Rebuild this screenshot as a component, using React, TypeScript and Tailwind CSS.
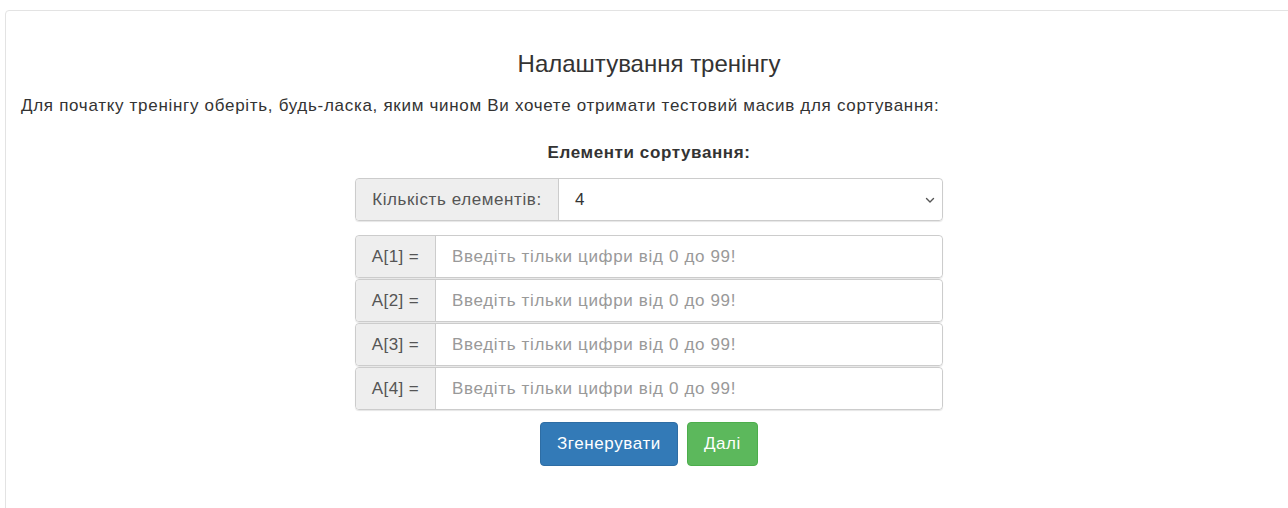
import React from "react";

const font = { fontFamily: '"Liberation Sans", Arial, sans-serif' };

const fieldShadow =
  "shadow-[inset_0_1px_1px_rgba(0,0,0,0.075),0_1px_1px_rgba(0,0,0,0.1)]";

function ElementRow({ index }: { index: number }) {
  return (
    <div className={`flex h-[43px] w-full rounded-[4px] border border-[#cccccc] ${fieldShadow}`}>
      <div className="flex w-[80px] shrink-0 items-center justify-center rounded-l-[4px] border-r border-[#cccccc] bg-[#eeeeee] text-[17px] tracking-[0.4px] text-[#555555]">
        A[{index}] =
      </div>
      <input
        className="min-w-0 flex-1 rounded-r-[4px] bg-white px-[16px] text-[17px] tracking-[0.65px] text-[#555555] outline-none placeholder:text-[#999999]"
        placeholder="Введіть тільки цифри від 0 до 99!"
      />
    </div>
  );
}

export default function App() {
  return (
    <div className="h-[508px] w-screen overflow-hidden bg-white text-[#333333]" style={font}>
      <div className="pl-[5px] pt-[10px]">
        <div className="w-[1288px] rounded-[4px] border border-[#e3e3e3] px-[15px] pb-[60px]">
          <h3 className="mt-[38px] text-center text-[24px] leading-[30px] text-[#333333]">
            Налаштування тренінгу
          </h3>
          <p className="mt-[16px] text-[17px] leading-[22px] tracking-[0.7px]">
            Для початку тренінгу оберіть, будь-ласка, яким чином Ви хочете отримати тестовий масив для сортування:
          </p>
          <div className="mx-auto mt-[25px] w-[588px]">
            <div className="text-center text-[17px] font-bold leading-[22px] tracking-[0.6px]">
              Елементи сортування:
            </div>
            <div className={`mt-[14px] flex h-[43px] rounded-[4px] border border-[#cccccc] ${fieldShadow}`}>
              <div className="flex w-[203px] shrink-0 items-center justify-center rounded-l-[4px] border-r border-[#cccccc] bg-[#eeeeee] text-[17px] tracking-[0.6px] text-[#555555]">
                Кількість елементів:
              </div>
              <div className="flex flex-1 items-center justify-between rounded-r-[4px] bg-white pl-[16px] pr-[6px] text-[17px] text-[#333333]">
                <span>4</span>
                <svg width="12" height="12" viewBox="0 0 12 12" fill="none">
                  <path d="M2.5 4.5 L6 8 L9.5 4.5" stroke="#555555" strokeWidth="1.4" strokeLinecap="round" strokeLinejoin="round" />
                </svg>
              </div>
            </div>
            <div className="mt-[14px] flex flex-col gap-[1px]">
              {[1, 2, 3, 4].map((i) => (
                <ElementRow key={i} index={i} />
              ))}
            </div>
            <div className="mt-[12px] flex justify-center gap-[9px]">
              <button className="h-[44px] rounded-[4px] border border-[#2e6da4] bg-[#337ab7] px-[16px] text-[17px] tracking-[0.6px] text-white">
                Згенерувати
              </button>
              <button className="h-[44px] rounded-[4px] border border-[#4cae4c] bg-[#5cb85c] px-[16px] text-[17px] tracking-[0.6px] text-white">
                Далі
              </button>
            </div>
          </div>
        </div>
      </div>
    </div>
  );
}
